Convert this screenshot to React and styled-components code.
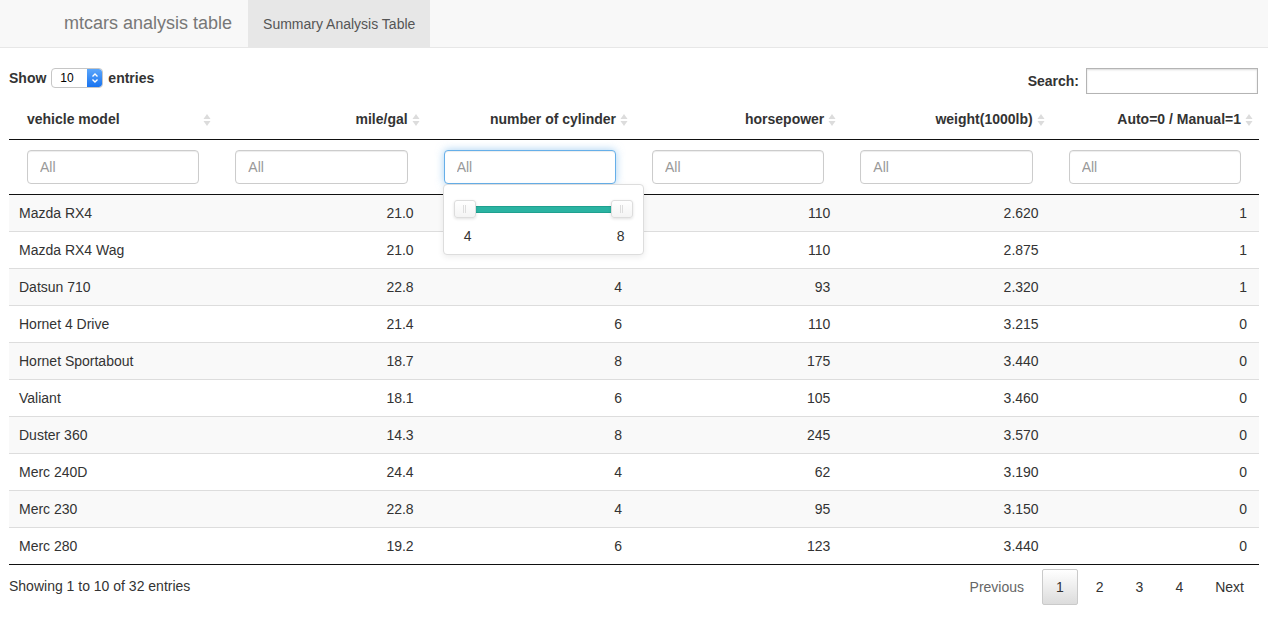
import styled, { createGlobalStyle } from "styled-components";

const GlobalStyle = createGlobalStyle`
    body {
        margin: 0;
        font-family: "Liberation Sans", Arial, sans-serif;
        font-size: 14px;
        color: #333;
        background: #fff;
    }
    * {
        box-sizing: border-box;
    }
`;

const cars = [
    ["Mazda RX4", "21.0", 6, 110, "2.620", 1],
    ["Mazda RX4 Wag", "21.0", 6, 110, "2.875", 1],
    ["Datsun 710", "22.8", 4, 93, "2.320", 1],
    ["Hornet 4 Drive", "21.4", 6, 110, "3.215", 0],
    ["Hornet Sportabout", "18.7", 8, 175, "3.440", 0],
    ["Valiant", "18.1", 6, 105, "3.460", 0],
    ["Duster 360", "14.3", 8, 245, "3.570", 0],
    ["Merc 240D", "24.4", 4, 62, "3.190", 0],
    ["Merc 230", "22.8", 4, 95, "3.150", 0],
    ["Merc 280", "19.2", 6, 123, "3.440", 0],
];

const columns = [
    "vehicle model",
    "mile/gal",
    "number of cylinder",
    "horsepower",
    "weight(1000lb)",
    "Auto=0 / Manual=1",
];

function SortIcon() {
    return (
        <SortSvg width="8" height="14" viewBox="0 0 8 14">
            <path d="M4 1 L7.5 6 L0.5 6 Z" fill="#dcdcdc" />
            <path d="M4 13 L7.5 8 L0.5 8 Z" fill="#dcdcdc" />
        </SortSvg>
    );
}

export default function App() {
    return (
        <>
            <GlobalStyle />
            <Navbar>
                <Brand>mtcars analysis table</Brand>
                <Tab>Summary Analysis Table</Tab>
            </Navbar>
            <Page>
                <Controls>
                    <Length>
                        Show
                        <FakeSelect>
                            <span>10</span>
                            <Stepper>
                                <svg width="10" height="14" viewBox="0 0 10 14">
                                    <path
                                        d="M2.5 5.5 L5 3 L7.5 5.5 M2.5 8.5 L5 11 L7.5 8.5"
                                        stroke="#fff"
                                        strokeWidth="1.4"
                                        fill="none"
                                    />
                                </svg>
                            </Stepper>
                        </FakeSelect>
                        entries
                    </Length>
                    <SearchBox>
                        Search:
                        <SearchInput type="text" />
                    </SearchBox>
                </Controls>
                <Table>
                    <thead>
                        <tr>
                            {columns.map((c, i) => (
                                <HeadCell key={c} $left={i === 0}>
                                    {c}
                                    <SortIcon />
                                </HeadCell>
                            ))}
                        </tr>
                        <tr>
                            {columns.map((c, i) => (
                                <FilterCell key={c}>
                                    <FilterInput placeholder="All" $focused={i === 2} />
                                    {i === 2 && (
                                        <SliderPopup>
                                            <Track>
                                                <Range />
                                                <Handle $side="left">
                                                    <i />
                                                </Handle>
                                                <Handle $side="right">
                                                    <i />
                                                </Handle>
                                            </Track>
                                            <SliderLabels>
                                                <span>4</span>
                                                <span>8</span>
                                            </SliderLabels>
                                        </SliderPopup>
                                    )}
                                </FilterCell>
                            ))}
                        </tr>
                    </thead>
                    <tbody>
                        {cars.map((row) => (
                            <Row key={row[0]}>
                                {row.map((v, i) => (
                                    <Cell key={i} $left={i === 0}>
                                        {v}
                                    </Cell>
                                ))}
                            </Row>
                        ))}
                    </tbody>
                </Table>
                <Footer>
                    <Info>Showing 1 to 10 of 32 entries</Info>
                    <Pager>
                        <PageButton $disabled>Previous</PageButton>
                        <PageButton $current>1</PageButton>
                        <PageButton>2</PageButton>
                        <PageButton>3</PageButton>
                        <PageButton>4</PageButton>
                        <PageButton>Next</PageButton>
                    </Pager>
                </Footer>
            </Page>
        </>
    );
}

const Navbar = styled.div`
    height: 48px;
    background: #f8f8f8;
    border-bottom: 1px solid #e7e7e7;
    display: flex;
    align-items: stretch;
    padding-left: 64px;
`;

const Brand = styled.div`
    font-size: 18px;
    color: #777;
    display: flex;
    align-items: center;
    padding-right: 16px;
`;

const Tab = styled.div`
    background: #e7e7e7;
    color: #555;
    font-size: 14px;
    display: flex;
    align-items: center;
    padding: 0 15px;
`;

const Page = styled.div`
    padding: 0 9px;
`;

const Controls = styled.div`
    display: flex;
    justify-content: space-between;
    align-items: flex-start;
    margin-top: 20px;
    margin-right: 1px;
    height: 26px;
    font-weight: bold;
`;

const Length = styled.div`
    display: flex;
    align-items: center;
    height: 20px;
    gap: 5px;
`;

const FakeSelect = styled.div`
    width: 52px;
    height: 20px;
    border: 1px solid #c6c6c6;
    border-radius: 4px;
    background: #fff;
    display: flex;
    align-items: center;
    justify-content: space-between;
    font-weight: normal;
    font-size: 12px;
    color: #000;
    padding-left: 8px;
    overflow: hidden;
`;

const Stepper = styled.div`
    width: 15px;
    height: 18px;
    background: linear-gradient(#5ba6fb, #1873f0);
    border-radius: 0 3px 3px 0;
    display: flex;
    align-items: center;
    justify-content: center;
`;

const SearchBox = styled.label`
    display: flex;
    align-items: center;
    gap: 7px;
`;

const SearchInput = styled.input`
    width: 172px;
    height: 26px;
    border: 1px solid #b4b4b4;
    box-shadow: inset 0 1px 2px rgba(0, 0, 0, 0.15);
    outline: none;
`;

const Table = styled.table`
    width: 100%;
    table-layout: fixed;
    border-collapse: collapse;
    margin-top: 6px;
    border-bottom: 1px solid #111;
`;

const HeadCell = styled.th`
    position: relative;
    padding: 10px 18px;
    line-height: 19px;
    text-align: ${(p) => (p.$left ? "left" : "right")};
    border-bottom: 1px solid #111;
    font-weight: bold;
`;

const SortSvg = styled.svg`
    position: absolute;
    right: 6px;
    top: 13px;
`;

const FilterCell = styled.td`
    position: relative;
    padding: 10px 18px;
    border-bottom: 1px solid #111;
`;

const FilterInput = styled.input`
    display: block;
    width: 100%;
    height: 34px;
    padding: 6px 12px;
    font-family: inherit;
    font-size: 14px;
    border-radius: 4px;
    border: 1px solid ${(p) => (p.$focused ? "#66afe9" : "#ccc")};
    box-shadow: ${(p) =>
        p.$focused
            ? "inset 0 1px 1px rgba(0,0,0,.075), 0 0 8px rgba(102,175,233,.6)"
            : "inset 0 1px 1px rgba(0,0,0,.075)"};
    outline: none;
    &::placeholder {
        color: #999;
    }
`;

const SliderPopup = styled.div`
    position: absolute;
    left: 17px;
    top: 44px;
    width: 201px;
    height: 71px;
    background: #fff;
    border: 1px solid #ddd;
    border-radius: 4px;
    box-shadow: 0 2px 6px rgba(0, 0, 0, 0.08);
    z-index: 5;
    padding: 15px 10px 0;
`;

const Track = styled.div`
    position: relative;
    height: 18px;
`;

const Range = styled.div`
    position: absolute;
    left: 12px;
    right: 12px;
    top: 6px;
    height: 7px;
    background: #2ab3a2;
    border: 1px solid #1fa08f;
`;

const Handle = styled.div`
    position: absolute;
    top: 0;
    ${(p) => (p.$side === "left" ? "left: 0;" : "right: 0;")}
    width: 22px;
    height: 18px;
    background: linear-gradient(#fff, #f4f4f4);
    border: 1px solid #ddd;
    border-radius: 3px;
    box-shadow: 0 1px 3px rgba(0, 0, 0, 0.12);
    display: flex;
    align-items: center;
    justify-content: center;
    i {
        width: 3px;
        height: 8px;
        border-left: 1px solid #ddd;
        border-right: 1px solid #ddd;
    }
`;

const SliderLabels = styled.div`
    display: flex;
    justify-content: space-between;
    padding: 0 8px 0 10px;
    margin-top: 10px;
    font-size: 14px;
    color: #333;
`;

const Row = styled.tr`
    &:nth-child(odd) {
        background: #f9f9f9;
    }
    & + & td {
        border-top: 1px solid #ddd;
    }
`;

const Cell = styled.td`
    padding: 8px 12px 8px 10px;
    line-height: 20px;
    text-align: ${(p) => (p.$left ? "left" : "right")};
`;

const Footer = styled.div`
    display: flex;
    justify-content: space-between;
    align-items: center;
    padding-top: 4px;
`;

const Info = styled.div`
    margin-top: -3px;
`;

const Pager = styled.div`
    display: flex;
    align-items: center;
    padding-right: 1px;
`;

const PageButton = styled.span`
    display: inline-block;
    height: 36px;
    line-height: 34px;
    padding: 0 13px;
    margin-left: 4px;
    border: 1px solid ${(p) => (p.$current ? "#cacaca" : "transparent")};
    border-radius: 2px;
    color: ${(p) => (p.$disabled ? "#666" : "#333")};
    background: ${(p) =>
        p.$current ? "linear-gradient(#fff, #dcdcdc)" : "transparent"};
`;
